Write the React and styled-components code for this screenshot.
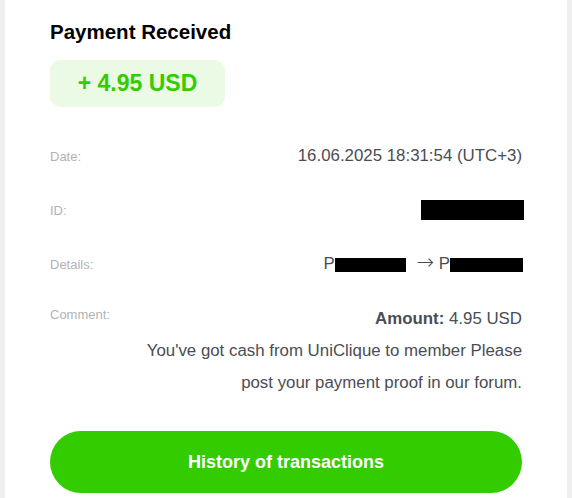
import React from 'react';
import styled, { createGlobalStyle } from 'styled-components';

const GlobalStyle = createGlobalStyle`
  html, body {
    margin: 0;
    padding: 0;
    background: #efefef;
  }
  body {
    font-family: "Liberation Sans", Arial, sans-serif;
  }
`;

const App = () => {
    return (
        <Page>
            <GlobalStyle />
            <Card>
                <Title>Payment Received</Title>
                <AmountBadge>+ 4.95 USD</AmountBadge>

                <Details>
                    <Row>
                        <Label>Date:</Label>
                        <Value>16.06.2025 18:31:54 (UTC+3)</Value>
                    </Row>
                    <Row>
                        <Label>ID:</Label>
                        <Redacted $w={103} $h={20} $shift={-2} />
                    </Row>
                    <Row>
                        <Label>Details:</Label>
                        <Value>
                            P<Redacted $w={71} $h={14} $inline $shift={4} /> <Arrow>→</Arrow> P
                            <Redacted $w={73} $h={14} $inline $shift={-1} />
                        </Value>
                    </Row>
                    <Row $top>
                        <Label $top>Comment:</Label>
                        <CommentText>
                            <div><strong>Amount:</strong> 4.95 USD</div>
                            <div>You've got cash from UniClique to member Please post your payment proof in our forum.</div>
                        </CommentText>
                    </Row>
                </Details>

                <HistoryButton type="button">History of transactions</HistoryButton>
            </Card>
        </Page>
    );
};

// Styled components
const Page = styled.div`
  min-height: 100vh;
  background: #efefef;
  padding: 0 5px;
`;

const Card = styled.div`
  background: #ffffff;
  min-height: 100vh;
  padding: 20px 45px 20px;
  box-sizing: border-box;
  display: flex;
  flex-direction: column;
  align-items: flex-start;
`;

const Title = styled.h1`
  margin: 0;
  font-size: 20.5px;
  line-height: 23px;
  font-weight: bold;
  color: #000;
`;

const AmountBadge = styled.div`
  margin-top: 17px;
  width: 175px;
  height: 47px;
  border-radius: 11px;
  background: #ebfae5;
  color: #33cc00;
  font-size: 23px;
  font-weight: bold;
  display: flex;
  align-items: center;
  justify-content: center;
`;

const Details = styled.div`
  align-self: stretch;
  margin-top: 33px;
  display: flex;
  flex-direction: column;
  gap: 22px;
`;

const Row = styled.div`
  display: flex;
  justify-content: space-between;
  align-items: ${props => (props.$top ? 'flex-start' : 'center')};
  min-height: 32px;
`;

const Label = styled.span`
  font-size: 13px;
  line-height: 15px;
  color: #b3b3b3;
  margin-top: ${props => (props.$top ? '5px' : '0')};
`;

const Value = styled.span`
  font-size: 16.85px;
  line-height: 32px;
  color: #4a4d55;
  text-align: right;
`;

const Arrow = styled.span`
  font-family: "DejaVu Sans", sans-serif;
  font-size: 21px;
  font-weight: 300;
  line-height: 1;
  margin-left: 2px;
`;

// $shift: extra space to the right of the box (negative pulls past the edge)
const Redacted = styled.span`
  display: inline-block;
  width: ${props => props.$w}px;
  height: ${props => props.$h}px;
  background: #000;
  margin-right: ${props => props.$shift || 0}px;
  vertical-align: ${props => (props.$inline ? '-3px' : 'middle')};
`;

const CommentText = styled.div`
  max-width: 392px;
  margin-top: 1px;
  font-size: 16.85px;
  line-height: 32px;
  color: #4a4d55;
  text-align: right;

  strong {
    font-weight: bold;
  }
`;

const HistoryButton = styled.button`
  align-self: stretch;
  margin-top: 32px;
  height: 62px;
  border: none;
  border-radius: 31px;
  background: #33cc00;
  color: #fff;
  font-family: "Liberation Sans", Arial, sans-serif;
  font-size: 18px;
  font-weight: bold;
  cursor: pointer;
`;

export default App;
